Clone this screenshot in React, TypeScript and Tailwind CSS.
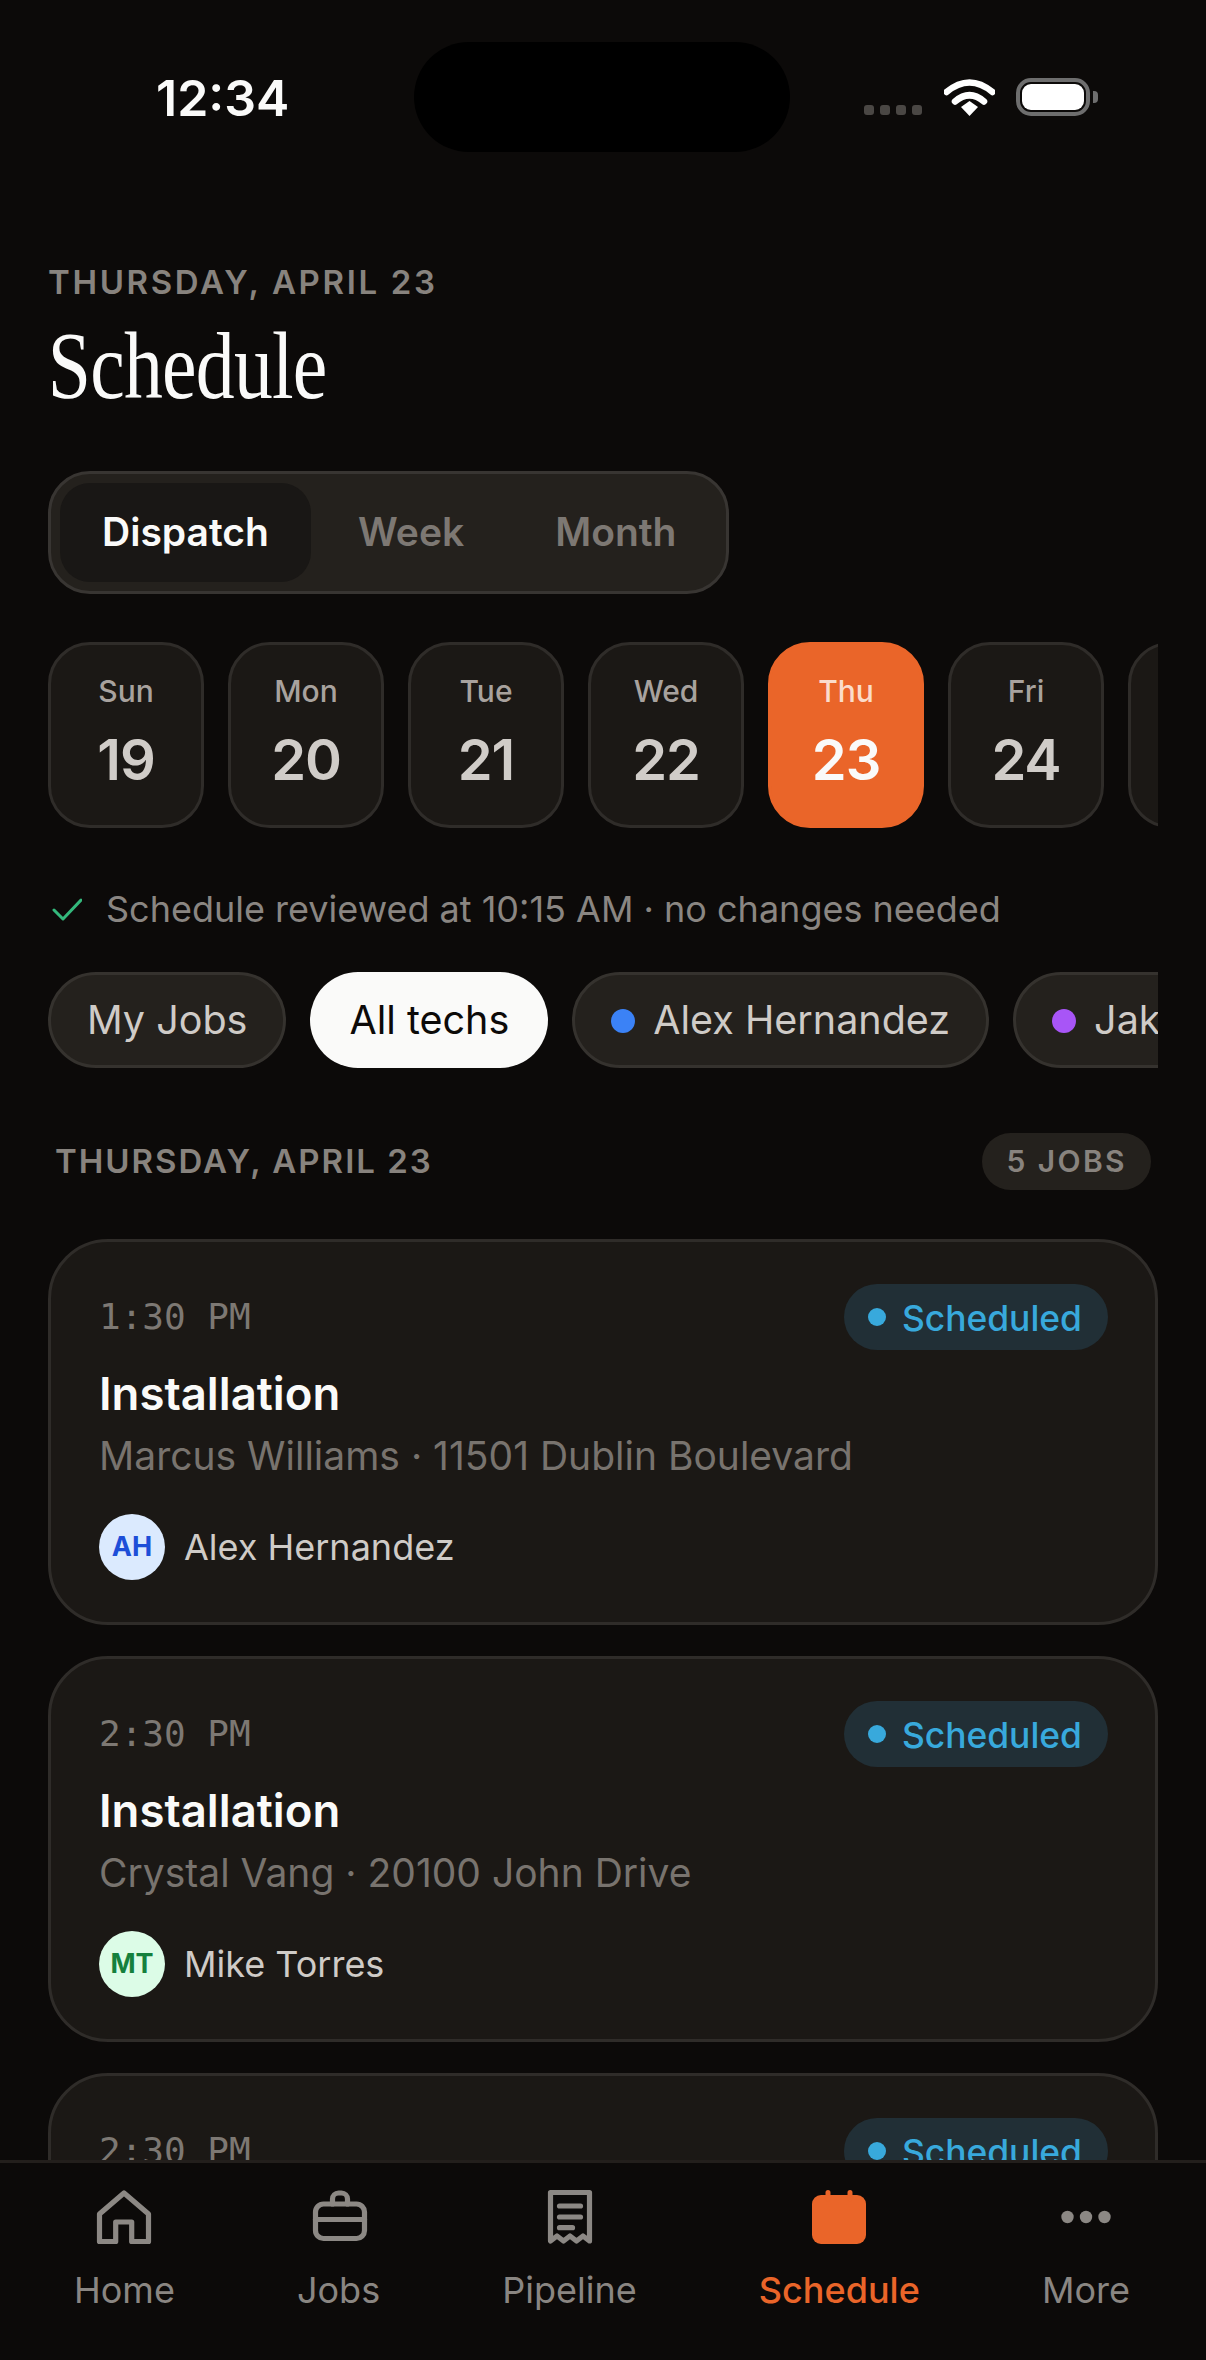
import React from 'react';

const days = [
  { label: 'Sun', date: '19' },
  { label: 'Mon', date: '20' },
  { label: 'Tue', date: '21' },
  { label: 'Wed', date: '22' },
  { label: 'Thu', date: '23', active: true },
  { label: 'Fri', date: '24' },
  { label: 'Sat', date: '25' },
];

const jobs = [
  {
    time: '1:30 PM',
    title: 'Installation',
    sub: 'Marcus Williams · 11501 Dublin Boulevard',
    initials: 'AH',
    tech: 'Alex Hernandez',
    avatar: 'bg-[#dbeafe] text-[#1d4ed8]',
  },
  {
    time: '2:30 PM',
    title: 'Installation',
    sub: 'Crystal Vang · 20100 John Drive',
    initials: 'MT',
    tech: 'Mike Torres',
    avatar: 'bg-[#dcfce7] text-[#15803d]',
  },
  {
    time: '2:30 PM',
    title: 'Installation',
    sub: 'Crystal Vang · 20100 John Drive',
    initials: 'MT',
    tech: 'Mike Torres',
    avatar: 'bg-[#dcfce7] text-[#15803d]',
  },
];

function StatusBar() {
  return (
    <div className="flex shrink-0 items-center pl-[156px] pt-[42px]">
      <span className="w-[258px] pt-[2px] text-[50px] font-semibold leading-[108px] text-[#fafaf9]">12:34</span>
      <div className="h-[110px] w-[376px] rounded-[55px] bg-black" />
      <div className="ml-[74px] flex items-center">
        <div className="mt-[26px] flex gap-[6px]">
          <div className="h-[10px] w-[10px] rounded-[3px] bg-[#4a4744]" />
          <div className="h-[10px] w-[10px] rounded-[3px] bg-[#4a4744]" />
          <div className="h-[10px] w-[10px] rounded-[3px] bg-[#4a4744]" />
          <div className="h-[10px] w-[10px] rounded-[3px] bg-[#4a4744]" />
        </div>
        <svg className="ml-[22px]" width="51" height="37" viewBox="0 0 51 37" fill="none">
          <path d="M2.5 13 Q25.5 -6 48.5 13" stroke="#fff" strokeWidth="6.5" strokeLinecap="round" fill="none" />
          <path d="M11 22.5 Q25.5 10 40 22.5" stroke="#fff" strokeWidth="6.5" strokeLinecap="round" fill="none" />
          <path d="M17 28 L25.5 22 L34 28 L25.5 37 Z" fill="#fff" />
        </svg>
        <div className="ml-[21px] h-[38px] w-[74px] rounded-[15px] border-[4px] border-[#6e6e6e] p-[2px]">
          <div className="h-full w-full rounded-[9px] bg-white" />
        </div>
        <div className="ml-[3px] h-[12px] w-[5px] rounded-r-[4px] bg-[#6e6e6e]" />
      </div>
    </div>
  );
}

function HomeIcon() {
  return (
    <svg width="72" height="72" viewBox="0 0 72 72" fill="none" stroke="#8c8884" strokeWidth="5.2" strokeLinejoin="round" strokeLinecap="round">
      <path d="M36 12 L11.5 33 V60.5 H27.7 V41 H43.7 V60.5 H60.5 V33 Z" />
    </svg>
  );
}

function BriefcaseIcon() {
  return (
    <svg width="72" height="72" viewBox="0 0 72 72" fill="none" stroke="#8c8884" strokeWidth="5.2" strokeLinejoin="round" strokeLinecap="round">
      <rect x="12.5" y="23" width="49" height="34.5" rx="8" />
      <path d="M12.5 38.5 H61.5" />
      <path d="M29.5 23 v-5 a6 6 0 0 1 6-6 h3 a6 6 0 0 1 6 6 v5" />
    </svg>
  );
}

function ReceiptIcon() {
  return (
    <svg width="72" height="72" viewBox="0 0 72 72" fill="none" stroke="#8c8884" strokeWidth="5.2" strokeLinejoin="round" strokeLinecap="round">
      <path d="M16.5 11.5 H55.5 V60 l-6.5-5 -6.5 5 -6.5-5 -6.5 5 -6.5-5 -6.5 5 Z" />
      <path d="M25.5 25 H46.5" />
      <path d="M25.5 36 H46.5" />
      <path d="M25.5 46.7 H38.5" />
    </svg>
  );
}

function CalendarIcon() {
  return (
    <svg width="72" height="72" viewBox="0 0 72 72" fill="none">
      <rect x="9" y="14" width="54" height="49" rx="9" fill="#ea6529" />
      <path d="M25 11.5 V18 M47 11.5 V18" stroke="#ea6529" strokeWidth="5" strokeLinecap="round" />
    </svg>
  );
}

function MoreIcon() {
  return (
    <svg width="72" height="72" viewBox="0 0 72 72" fill="#8c8884">
      <circle cx="17.5" cy="36" r="6.2" />
      <circle cx="36" cy="36" r="6.2" />
      <circle cx="54.5" cy="36" r="6.2" />
    </svg>
  );
}

function NavItem({ icon, label, active }: { icon: React.ReactNode; label: string; active?: boolean }) {
  return (
    <div className="flex flex-col items-center">
      <div className="-mx-[10px]">{icon}</div>
      <span className={`mt-[13px] text-[36px] leading-[48px] ${active ? 'font-medium text-[#ea6529]' : 'text-[#8a8682]'}`}>
        {label}
      </span>
    </div>
  );
}

function JobCard({ job }: { job: (typeof jobs)[number] }) {
  return (
    <div className="h-[386px] shrink-0 rounded-[60px] border-[3px] border-[#2f2c29] bg-[#1b1815] pl-[48px] pr-[47px] pt-[42px]">
      <div className="flex items-start justify-between">
        <span className="mt-[10px] font-['DejaVu_Sans_Mono',monospace] text-[36px] leading-[46px] text-[#7d7873]">{job.time}</span>
        <div className="flex h-[66px] items-center gap-[16px] rounded-[33px] bg-[#212f36] pl-[24px] pr-[26px]">
          <div className="h-[18px] w-[18px] rounded-full bg-[#38a9dc]" />
          <span className="pt-[3px] text-[35.4px] font-medium text-[#38a9dc]">Scheduled</span>
        </div>
      </div>
      <div className="mt-[16px] text-[45.5px] font-semibold leading-[56px] text-[#fafaf9]">{job.title}</div>
      <div className="mt-[6px] text-[39px] leading-[56px] text-[#78736e]">{job.sub}</div>
      <div className="mt-[30px] flex items-center gap-[19px]">
        <div className={`flex h-[66px] w-[66px] items-center justify-center rounded-full text-[27px] font-bold ${job.avatar}`}>{job.initials}</div>
        <span className="text-[36px] text-[#cfcbc7]">{job.tech}</span>
      </div>
    </div>
  );
}

export default function App() {
  return (
    <div className="flex h-[2360px] w-[1206px] flex-col overflow-hidden bg-[#0c0a09] font-['Inter',sans-serif]">
      <StatusBar />

      <main className="min-h-0 flex-1 overflow-hidden">
        <div className="mt-[110px] pl-[48px] text-[33px] font-semibold leading-[40px] tracking-[0.08em] text-[#88837e]">THURSDAY, APRIL 23</div>
        <h1 className="mt-[14px] origin-left scale-x-[0.81] pl-[59px] font-['Liberation_Serif',serif] text-[96px] font-normal leading-[100px] tracking-[-0.01em] text-[#fafaf9]">Schedule</h1>

        {/* Dispatch / Week / Month */}
        <div className="ml-[48px] mt-[55px] flex h-[123px] w-[681px] items-center rounded-[42px] border-[3px] border-[#383532] bg-[#24211d] pl-[9px]">
          <div className="flex h-[99px] w-[251px] items-center justify-center rounded-[30px] bg-[#191715] text-[39px] font-semibold text-[#fafaf9]">Dispatch</div>
          <div className="ml-[47px] text-[39px] font-semibold text-[#7d7873]">Week</div>
          <div className="ml-[91px] text-[39px] font-semibold text-[#7d7873]">Month</div>
        </div>

        {/* Day strip */}
        <div className="mx-[48px] mt-[48px] flex gap-[24px] overflow-hidden">
          {days.map((d) => (
            <div
              key={d.label}
              className={`flex h-[186px] w-[156px] shrink-0 flex-col items-center rounded-[42px] border-[3px] pt-[28px] ${
                d.active ? 'border-[#ea6529] bg-[#ea6529]' : 'border-[#2f2c29] bg-[#1b1815]'
              }`}
            >
              <span className={`text-[30px] font-medium leading-[36px] ${d.active ? 'text-[#fbdccb]' : 'text-[#a8a29e]'}`}>{d.label}</span>
              <span className={`mt-[19px] text-[56px] font-semibold leading-[64px] tracking-[-0.02em] ${d.active ? 'text-[#fafaf9]' : 'text-[#d0ccc8]'}`}>{d.date}</span>
            </div>
          ))}
        </div>

        {/* Review note */}
        <div className="ml-[52px] mt-[59px] flex items-center gap-[24px]">
          <svg width="30" height="26" viewBox="0 0 30 26" fill="none" stroke="#34b87c" strokeWidth="3" strokeLinecap="round" strokeLinejoin="round">
            <path d="M2 14 L11 23 L29 4" />
          </svg>
          <span className="text-[36px] leading-[44px] text-[#8a8682]">Schedule reviewed at 10:15 AM · no changes needed</span>
        </div>

        {/* Tech filter */}
        <div className="mx-[48px] mt-[41px] flex gap-[24px] overflow-hidden">
          <div className="flex h-[96px] shrink-0 items-center rounded-[48px] border-[3px] border-[#35322e] bg-[#24211d] px-[36px] pt-[2px] text-[39.5px] text-[#cfcbc7]">My Jobs</div>
          <div className="flex h-[96px] shrink-0 items-center rounded-[48px] bg-[#fafaf9] px-[39px] pt-[2px] text-[39.5px] text-[#0c0a09]">All techs</div>
          <div className="flex h-[96px] shrink-0 items-center gap-[18px] rounded-[48px] border-[3px] border-[#35322e] bg-[#24211d] px-[36px] pt-[2px] text-[39.5px] text-[#cfcbc7]">
            <div className="h-[24px] w-[24px] rounded-full bg-[#3b82f6]" />
            Alex Hernandez
          </div>
          <div className="flex h-[96px] shrink-0 items-center gap-[18px] rounded-[48px] border-[3px] border-[#35322e] bg-[#24211d] px-[36px] pt-[2px] text-[39.5px] text-[#cfcbc7]">
            <div className="h-[24px] w-[24px] rounded-full bg-[#a855f7]" />
            Jake
          </div>
        </div>

        {/* Section header */}
        <div className="ml-[55px] mr-[55px] mt-[65px] flex items-center justify-between">
          <span className="text-[33px] font-semibold tracking-[0.06em] text-[#88837e]">THURSDAY, APRIL 23</span>
          <span className="flex h-[57px] items-center rounded-[29px] bg-[#24211d] px-[24px] text-[30px] font-semibold tracking-[0.08em] text-[#88837e]">5 JOBS</span>
        </div>

        <div className="mx-[48px] mt-[49px] flex flex-col gap-[31px]">
          {jobs.map((job, i) => (
            <JobCard key={i} job={job} />
          ))}
        </div>
      </main>

      {/* Tab bar */}
      <nav className="flex h-[200px] shrink-0 justify-between border-t-[3px] border-[#231f1c] bg-[#0c0a09] pl-[74px] pr-[76px] pt-[18px]">
        <NavItem icon={<HomeIcon />} label="Home" />
        <NavItem icon={<BriefcaseIcon />} label="Jobs" />
        <NavItem icon={<ReceiptIcon />} label="Pipeline" />
        <NavItem icon={<CalendarIcon />} label="Schedule" active />
        <NavItem icon={<MoreIcon />} label="More" />
      </nav>
    </div>
  );
}
